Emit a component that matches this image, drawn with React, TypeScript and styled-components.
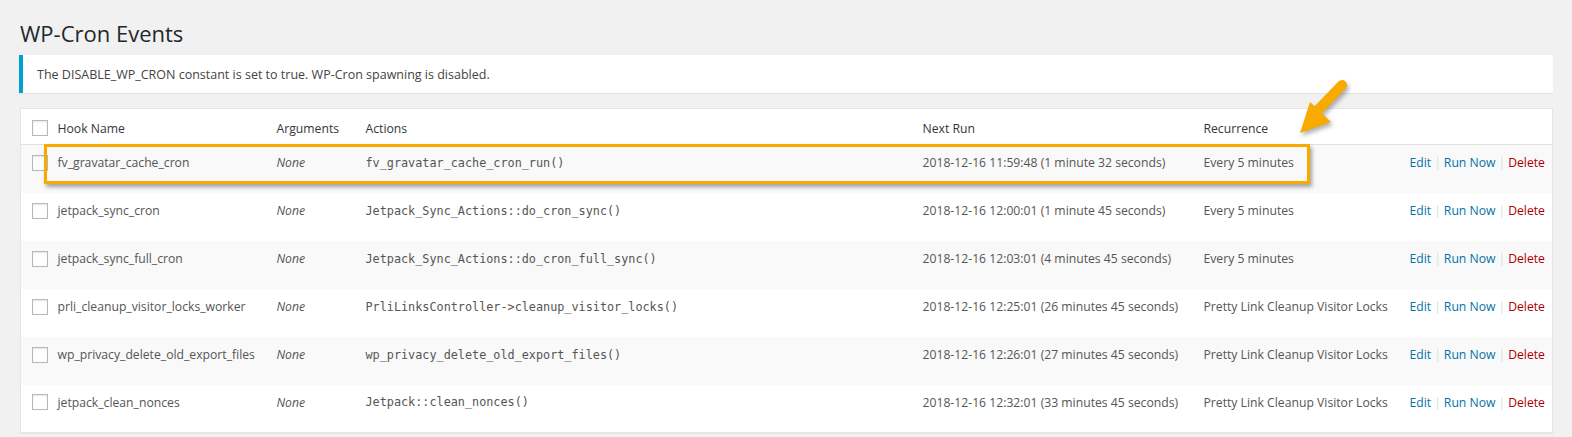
import React from 'react';
import styled, { createGlobalStyle } from 'styled-components';

interface ICronEvent {
  hook: string;
  action: string;
  next: string;
  recurrence: string;
}

const events: ICronEvent[] = [
  { hook: 'fv_gravatar_cache_cron', action: 'fv_gravatar_cache_cron_run()', next: '2018-12-16 11:59:48 (1 minute 32 seconds)', recurrence: 'Every 5 minutes' },
  { hook: 'jetpack_sync_cron', action: 'Jetpack_Sync_Actions::do_cron_sync()', next: '2018-12-16 12:00:01 (1 minute 45 seconds)', recurrence: 'Every 5 minutes' },
  { hook: 'jetpack_sync_full_cron', action: 'Jetpack_Sync_Actions::do_cron_full_sync()', next: '2018-12-16 12:03:01 (4 minutes 45 seconds)', recurrence: 'Every 5 minutes' },
  { hook: 'prli_cleanup_visitor_locks_worker', action: 'PrliLinksController->cleanup_visitor_locks()', next: '2018-12-16 12:25:01 (26 minutes 45 seconds)', recurrence: 'Pretty Link Cleanup Visitor Locks' },
  { hook: 'wp_privacy_delete_old_export_files', action: 'wp_privacy_delete_old_export_files()', next: '2018-12-16 12:26:01 (27 minutes 45 seconds)', recurrence: 'Pretty Link Cleanup Visitor Locks' },
  { hook: 'jetpack_clean_nonces', action: 'Jetpack::clean_nonces()', next: '2018-12-16 12:32:01 (33 minutes 45 seconds)', recurrence: 'Pretty Link Cleanup Visitor Locks' },
];

const GlobalStyle = createGlobalStyle`
  html, body { margin: 0; padding: 0; background: #f1f1f1; }
  body {
    font-family: "Open Sans", "Noto Sans", sans-serif;
    font-size: 12.2px;
    color: #444;
    overflow: hidden;
  }
`;

const Page = styled.div`
  padding: 14px 19px 0 19px;
  height: 437px;
  box-sizing: border-box;
  position: relative;
  overflow: hidden;
`;

const Title = styled.h1`
  margin: 0 0 0 1px;
  font-size: 22px;
  font-weight: 400;
  line-height: 38px;
  color: #23282d;
`;

const Notice = styled.div`
  margin-top: 3px;
  height: 38px;
  background: #fff;
  border-left: 4px solid #00a0d2;
  box-shadow: 0 1px 1px rgba(0, 0, 0, 0.06);
  padding-left: 14px;
  display: flex;
  align-items: center;
  font-size: 12.5px;
  color: #444;
`;

const Table = styled.table`
  margin: 15px 0 0 1px;
  width: 1533px;
  table-layout: fixed;
  border-collapse: collapse;
  background: #fff;
  border: 1px solid #e5e5e5;
  box-shadow: 0 1px 1px rgba(0, 0, 0, 0.04);
`;

const Th = styled.th<{ $w?: number }>`
  width: ${(p) => (p.$w ? `${p.$w}px` : 'auto')};
  height: 36px;
  padding: 4px 10px 0 10px;
  text-align: left;
  font-weight: 400;
  color: #32373c;
  border-bottom: 1px solid #e1e1e1;
  box-sizing: border-box;
`;

const Row = styled.tr<{ $odd: boolean }>`
  background: ${(p) => (p.$odd ? '#f9f9f9' : '#fff')};
`;

const Td = styled.td<{ $italic?: boolean; $mono?: boolean; $right?: boolean }>`
  height: 48px;
  box-sizing: border-box;
  padding: 0 10px 12px 10px;
  vertical-align: middle;
  color: #555;
  white-space: nowrap;
  overflow: hidden;
  text-align: ${(p) => (p.$right ? 'right' : 'left')};
  font-style: ${(p) => (p.$italic ? 'italic' : 'normal')};
  font-family: ${(p) => (p.$mono ? '"DejaVu Sans Mono", "Liberation Mono", monospace' : 'inherit')};
  font-size: ${(p) => (p.$mono ? '11.8px' : 'inherit')};
`;

const CbCell = styled.td`
  height: 48px;
  box-sizing: border-box;
  padding: 0 0 12px 11px;
  vertical-align: middle;
`;

const CbHead = styled.th`
  width: 27px;
  padding: 2px 0 0 11px;
  border-bottom: 1px solid #e1e1e1;
  box-sizing: border-box;
  text-align: left;
`;

const Checkbox = styled.span`
  display: block;
  width: 16px;
  height: 16px;
  box-sizing: border-box;
  border: 1px solid #b4b9be;
  background: #fff;
  box-shadow: inset 0 1px 2px rgba(0, 0, 0, 0.1);
`;

const Link = styled.a<{ $danger?: boolean }>`
  color: ${(p) => (p.$danger ? '#a00' : '#0073aa')};
  text-decoration: none;
`;

const Sep = styled.span`
  color: #ddd;
  margin: 0 3px;
`;

const Highlight = styled.div`
  position: absolute;
  left: 44px;
  top: 144px;
  width: 1266px;
  height: 40px;
  box-sizing: border-box;
  border: 3px solid #f8aa00;
  box-shadow: 2px 3px 4px rgba(0, 0, 0, 0.35);
  pointer-events: none;
`;

const Arrow = styled.svg`
  position: absolute;
  left: 1290px;
  top: 76px;
  overflow: visible;
  filter: drop-shadow(2px 3px 2px rgba(0, 0, 0, 0.3));
`;

export default function App() {
  return (
    <>
      <GlobalStyle />
      <Page>
        <Title>WP-Cron Events</Title>
        <Notice>The DISABLE_WP_CRON constant is set to true. WP-Cron spawning is disabled.</Notice>
        <Table>
          <thead>
            <tr>
              <CbHead>
                <Checkbox />
              </CbHead>
              <Th $w={219}>Hook Name</Th>
              <Th $w={89}>Arguments</Th>
              <Th $w={557}>Actions</Th>
              <Th $w={281}>Next Run</Th>
              <Th $w={206}>Recurrence</Th>
              <Th />
            </tr>
          </thead>
          <tbody>
            {events.map((ev, i) => (
              <Row key={ev.hook} $odd={i % 2 === 0}>
                <CbCell>
                  <Checkbox />
                </CbCell>
                <Td>{ev.hook}</Td>
                <Td $italic>None</Td>
                <Td $mono>{ev.action}</Td>
                <Td>{ev.next}</Td>
                <Td>{ev.recurrence}</Td>
                <Td $right>
                  <Link>Edit</Link>
                  <Sep>|</Sep>
                  <Link>Run Now</Link>
                  <Sep>|</Sep>
                  <Link $danger>Delete</Link>
                </Td>
              </Row>
            ))}
          </tbody>
        </Table>
        <Highlight />
        <Arrow width="60" height="60" viewBox="0 0 60 60">
          <line x1="52" y1="9" x2="26" y2="36" stroke="#f8aa00" strokeWidth="10" strokeLinecap="round" />
          <polygon points="20,26 10,57 41,46" fill="#f8aa00" />
        </Arrow>
      </Page>
    </>
  );
}
